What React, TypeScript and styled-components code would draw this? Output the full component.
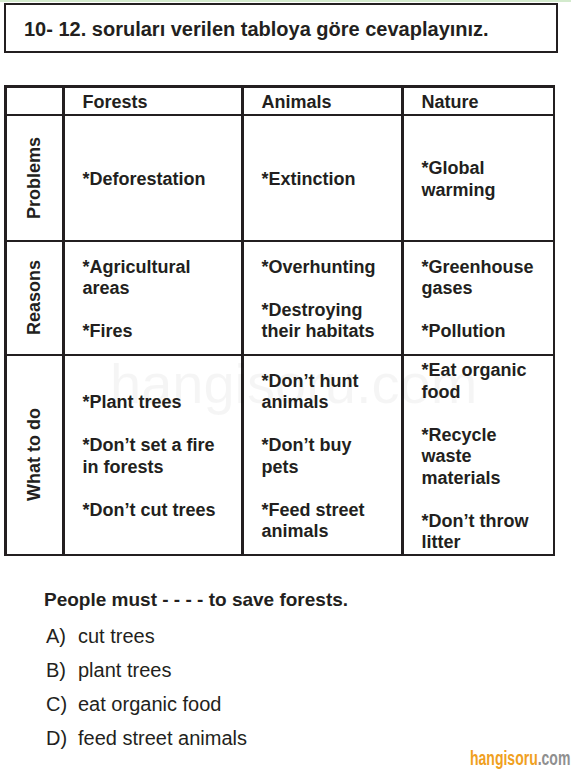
import { Fragment } from "react";
import { createGlobalStyle, styled } from "styled-components";

const GlobalStyle = createGlobalStyle`
  html, body {
    margin: 0;
    padding: 0;
    background: #ffffff;
  }
  body {
    font-family: "Liberation Sans", Arial, sans-serif;
    color: #231f20;
  }
`;

const Page = styled.div`
  position: relative;
  width: 571px;
  height: 772px;
  box-sizing: border-box;
  border-top: 2px solid #d3eacd;
  overflow: hidden;
`;

const TitleBox = styled.div`
  box-sizing: border-box;
  width: 554px;
  height: 50px;
  margin: 1px 0 0 4px;
  padding: 2px 0 0 18px;
  border: 2.5px solid #231f20;
  display: flex;
  align-items: center;
  font-size: 20px;
  font-weight: 700;
  white-space: nowrap;
`;

const TableWrap = styled.div`
  position: relative;
  margin: 32px 0 0 4px;
  width: 551px;
`;

const Grid = styled.div`
  display: grid;
  grid-template-columns: 55.5px 176.5px 157.5px 149px;
  grid-template-rows: 26px 123.5px 111.5px 197.5px;
  gap: 2.5px;
  padding: 2.5px;
  background: #231f20;
`;

const Cell = styled.div`
  background: #ffffff;
  display: flex;
  flex-direction: column;
  justify-content: center;
  gap: 21.5px;
  padding: 4px 0 0 18px;
  font-size: 18px;
  font-weight: 700;
  line-height: 21.5px;
  white-space: nowrap;
`;

const LabelCell = styled.div`
  background: #ffffff;
  display: flex;
  align-items: center;
  justify-content: center;
`;

const RowLabel = styled.span`
  writing-mode: vertical-rl;
  transform: rotate(180deg);
  font-size: 18px;
  font-weight: 700;
  line-height: 21px;
  white-space: nowrap;
`;

const Item = styled.div``;

const Watermark = styled.div`
  position: absolute;
  left: 106px;
  top: 266px;
  font-size: 56px;
  color: rgba(0, 0, 0, 0.04);
  pointer-events: none;
  white-space: nowrap;
`;

const Question = styled.div`
  margin: 32px 0 0 44px;
  font-size: 19px;
  font-weight: 700;
  line-height: 24px;
  white-space: nowrap;
`;

const Options = styled.div`
  margin: 7px 0 0 46px;
  display: grid;
  grid-template-columns: 32px auto;
  justify-content: start;
  font-size: 20px;
  line-height: 34px;
`;

const Letter = styled.span``;
const Answer = styled.span``;

const Logo = styled.div`
  position: absolute;
  right: 1px;
  bottom: 3px;
  font-size: 20px;
  font-weight: 700;
  line-height: 22px;
  color: #f0a01e;
  transform: scaleX(0.7);
  transform-origin: right bottom;
`;

const LogoTld = styled.span`
  color: #8f8f8f;
`;

type Lines = string[];

const headers = ["Forests", "Animals", "Nature"];

const rows: { label: string; cells: Lines[][] }[] = [
  {
    label: "Problems",
    cells: [[["*Deforestation"]], [["*Extinction"]], [["*Global", "warming"]]],
  },
  {
    label: "Reasons",
    cells: [
      [["*Agricultural", "areas"], ["*Fires"]],
      [["*Overhunting"], ["*Destroying", "their habitats"]],
      [["*Greenhouse", "gases"], ["*Pollution"]],
    ],
  },
  {
    label: "What to do",
    cells: [
      [["*Plant trees"], ["*Don’t set a fire", "in forests"], ["*Don’t cut trees"]],
      [["*Don’t hunt", "animals"], ["*Don’t buy", "pets"], ["*Feed street", "animals"]],
      [["*Eat organic", "food"], ["*Recycle", "waste", "materials"], ["*Don’t throw", "litter"]],
    ],
  },
];

const options = [
  ["A)", "cut trees"],
  ["B)", "plant trees"],
  ["C)", "eat organic food"],
  ["D)", "feed street animals"],
];

export default function App() {
  return (
    <Page>
      <GlobalStyle />
      <TitleBox>10- 12. soruları verilen tabloya göre cevaplayınız.</TitleBox>

      <TableWrap>
        <Grid>
          <LabelCell />
          {headers.map((h) => (
            <Cell key={h}>{h}</Cell>
          ))}
          {rows.map((row) => (
            <Fragment key={row.label}>
              <LabelCell>
                <RowLabel>{row.label}</RowLabel>
              </LabelCell>
              {row.cells.map((items, i) => (
                <Cell key={i}>
                  {items.map((lines, j) => (
                    <Item key={j}>
                      {lines.map((line, k) => (
                        <div key={k}>{line}</div>
                      ))}
                    </Item>
                  ))}
                </Cell>
              ))}
            </Fragment>
          ))}
        </Grid>
        <Watermark>hangisoru.com</Watermark>
      </TableWrap>

      <Question>People must - - - - to save forests.</Question>
      <Options>
        {options.map(([l, a]) => (
          <Fragment key={l}>
            <Letter>{l}</Letter>
            <Answer>{a}</Answer>
          </Fragment>
        ))}
      </Options>

      <Logo>
        hangisoru<LogoTld>.com</LogoTld>
      </Logo>
    </Page>
  );
}
